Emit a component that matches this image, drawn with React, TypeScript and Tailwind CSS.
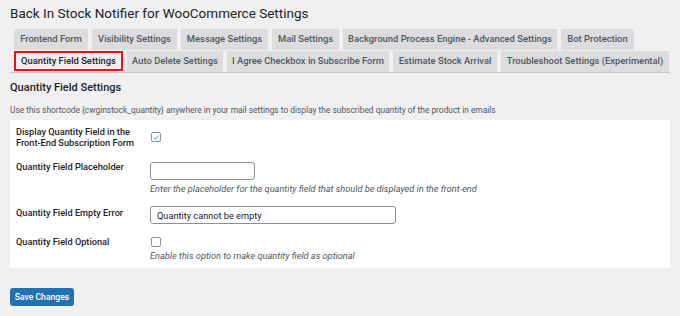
import React from "react";

type TabDef = { label: string; w: string };

// widths are written out in full so Tailwind picks them up
const ROW1: TabDef[] = [
  { label: "Frontend Form", w: "w-[74px]" },
  { label: "Visibility Settings", w: "w-[85px]" },
  { label: "Message Settings", w: "w-[87px]" },
  { label: "Mail Settings", w: "w-[67px]" },
  { label: "Background Process Engine - Advanced Settings", w: "w-[214px]" },
  { label: "Bot Protection", w: "w-[73px]" },
];
const ROW2: TabDef[] = [
  { label: "Quantity Field Settings", w: "w-[109px]" },
  { label: "Auto Delete Settings", w: "w-[96px]" },
  { label: "I Agree Checkbox in Subscribe Form", w: "w-[162px]" },
  { label: "Estimate Stock Arrival", w: "w-[104px]" },
  { label: "Troubleshoot Settings (Experimental)", w: "w-[168px]" },
];
const ACTIVE = "Quantity Field Settings";

function Tab({ label, w }: TabDef) {
  if (label === ACTIVE) {
    return (
      <div className={`flex h-[20px] shrink-0 items-center justify-center whitespace-nowrap border-2 border-[#e8141b] bg-[#f0f0f1] text-[9.4px] font-medium text-[#1d2327] ${w}`}>
        {label}
      </div>
    );
  }
  return (
    <div className={`flex h-[21px] shrink-0 items-center justify-center whitespace-nowrap bg-[#dcdcde] text-[9.4px] font-medium text-[#50575e] ${w}`}>
      {label}
    </div>
  );
}

function Checkbox({ checked }: { checked?: boolean }) {
  return (
    <span className="flex size-[10px] items-center justify-center rounded-[2px] border border-[#8c8f94] bg-white">
      {checked && (
        <svg viewBox="0 0 20 20" className="size-[9px]">
          <path d="M4.5 10.5 L8.5 14.5 L15.5 5" fill="none" stroke="#3582c4" strokeWidth="2.2" strokeLinecap="round" strokeLinejoin="round" />
        </svg>
      )}
    </span>
  );
}

export default function App() {
  return (
    <div
      className="h-[316px] w-[680px] overflow-hidden bg-[#f0f0f1] px-[10px] text-[#1d2327]"
      style={{ fontFamily: "Roboto, 'Noto Sans', sans-serif" }}
    >
      <h1 className="pt-[3px] text-[13.5px] leading-[20px] font-normal">
        Back In Stock Notifier for WooCommerce Settings
      </h1>

      <div className="mt-[6px] flex flex-col border-b border-[#c3c4c7] pl-[4px]">
        <div className="flex gap-[4px]">
          {ROW1.map((t) => (
            <Tab key={t.label} {...t} />
          ))}
        </div>
        <div className="mt-[1px] flex gap-[4px]">
          {ROW2.map((t) => (
            <Tab key={t.label} {...t} />
          ))}
        </div>
      </div>

      <h2 className="mt-[7px] text-[11px] leading-[16px] font-medium">Quantity Field Settings</h2>
      <p className="mt-[8px] text-[8.4px] leading-[12px] text-[#50575e]">
        Use this shortcode {"{cwginstock_quantity}"} anywhere in your mail settings to display the subscribed quantity of the product in emails
      </p>

      <div className="mt-[4px] bg-white px-[6px] pt-[6px] pb-[7px] text-[9.2px] leading-[11px]">
        <div className="flex items-center">
          <div className="w-[135px] font-medium">
            Display Quantity Field in the
            <br />
            Front-End Subscription Form
          </div>
          <Checkbox checked />
        </div>

        <div className="mt-[13px] flex">
          <div className="w-[134px] font-medium">Quantity Field Placeholder</div>
          <div className="flex flex-col">
            <div className="mt-[1px] h-[18px] w-[105px] rounded-[3px] border border-[#8c8f94] bg-white" />
            <p className="mt-[3px] text-[9.2px] italic text-[#50575e]">
              Enter the placeholder for the quantity field that should be displayed in the front-end
            </p>
          </div>
        </div>

        <div className="mt-[12px] flex">
          <div className="w-[134px] pt-[1px] font-medium">Quantity Field Empty Error</div>
          <div className="flex h-[18px] w-[246px] items-center rounded-[3px] border border-[#8c8f94] bg-white px-[6px]">
            Quantity cannot be empty
          </div>
        </div>

        <div className="mt-[12px] flex">
          <div className="w-[134px] font-medium">Quantity Field Optional</div>
          <div className="flex flex-col">
            <div className="pt-[1px] pl-[1px]">
              <Checkbox />
            </div>
            <p className="mt-[3px] text-[9.2px] italic text-[#50575e]">
              Enable this option to make quantity field as optional
            </p>
          </div>
        </div>
      </div>

      <button className="mt-[20px] flex h-[18px] w-[64px] items-center justify-center rounded-[3px] bg-[#2271b1] text-[8.6px] font-medium text-white">
        Save Changes
      </button>
    </div>
  );
}
